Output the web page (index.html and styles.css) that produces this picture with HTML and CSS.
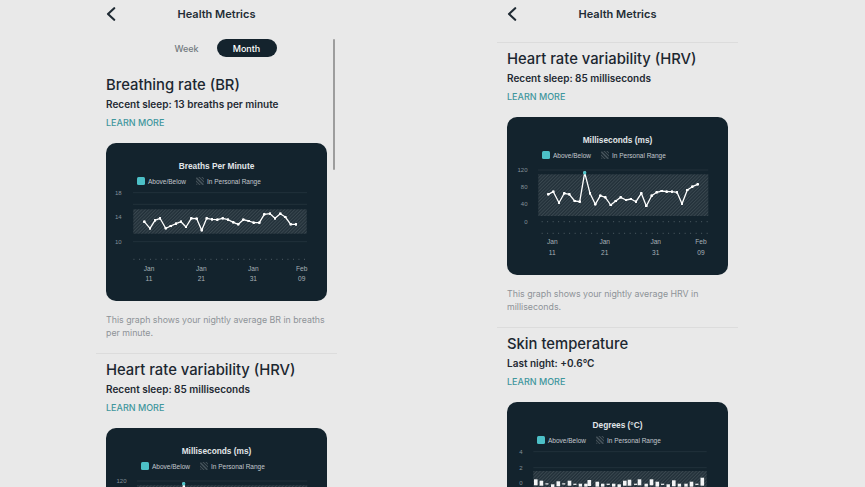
FILE: index.html
```html
<!DOCTYPE html>
<html lang="en">
<head>
<meta charset="utf-8">
<title>Health Metrics</title>
<link rel="stylesheet" href="styles.css">
</head>
<body>
<div class="stage">

  <section class="screen">
    <header class="topbar">
      <svg class="back" viewBox="0 0 10 14" width="10" height="14"><path d="M8.2 1.2 L2 7 L8.2 12.8"/></svg>
      <h1 class="title">Health Metrics</h1>
      <span></span>
    </header>
    <div class="segmented">
      <span class="seg">Week</span>
      <span class="seg seg-active">Month</span>
    </div>
    <div class="scrollbar"></div>

    <article class="metric metric-first">
      <h2 class="metric-name">Breathing rate (BR)</h2>
      <p class="reading">Recent sleep: 13 breaths per minute</p>
      <a class="learn">LEARN MORE</a>
      <div class="card">
        <div class="card-title">Breaths Per Minute</div>
        <div class="legend legend-br">
          <span class="sw sw-teal"></span><span class="lg-text">Above/Below</span>
          <span class="sw sw-hatch"></span><span class="lg-text">In Personal Range</span>
        </div>
        <svg class="plot" viewBox="0 43 221 115" width="221" height="115">
          <defs>
            <pattern id="hatchA" width="2.4" height="2.4" patternUnits="userSpaceOnUse" patternTransform="rotate(45)">
              <rect width="2.4" height="2.4" fill="#223039"/><rect width="1" height="2.4" fill="#3a4850"/>
            </pattern>
            <marker id="dotA" viewBox="0 0 4 4" refX="2" refY="2" markerWidth="2.8" markerHeight="2.8" markerUnits="userSpaceOnUse">
              <circle cx="2" cy="2" r="2" fill="#ffffff"/>
            </marker>
          </defs>
          <line class="grid" x1="27" y1="49.7" x2="201" y2="49.7"/>
          <line class="grid" x1="27" y1="61.3" x2="201" y2="61.3"/>
          <line class="grid" x1="27" y1="98.7" x2="201" y2="98.7"/>
          <rect x="27.3" y="66.3" width="173.4" height="24.4" fill="url(#hatchA)"/>
          <line class="ticks" x1="27.5" y1="116.3" x2="201" y2="116.3"/>
          <text class="ylab" x="15.7" y="51.8">18</text>
          <text class="ylab" x="15.7" y="76.3">14</text>
          <text class="ylab" x="15.7" y="100.8">10</text>
          <polyline class="series" marker-start="url(#dotA)" marker-mid="url(#dotA)" marker-end="url(#dotA)"
            points="38.3,78.7 44,85.3 49,77.3 54,75.3 59.7,85.3 64.7,83 70,80.7 75,78.7 80,84 85.3,75.3 90.7,75.7 95.7,87.3 100.7,75.3 106,76.3 111.3,76.7 116.7,75.3 122,76.7 127.3,79.3 132.3,81.3 137.3,76.7 142.7,78 147.7,79.7 153.3,79.7 158.3,71.3 164,70.7 169,75.3 174.3,70.7 179.3,74 184.7,81.3 190,81.3"/>
          <text class="xlab" x="43" y="127.8">Jan</text><text class="xlab" x="43" y="137.6">11</text>
          <text class="xlab" x="95.3" y="127.8">Jan</text><text class="xlab" x="95.3" y="137.6">21</text>
          <text class="xlab" x="147.3" y="127.8">Jan</text><text class="xlab" x="147.3" y="137.6">31</text>
          <text class="xlab" x="195.7" y="127.8">Feb</text><text class="xlab" x="195.7" y="137.6">09</text>
        </svg>
      </div>
      <p class="desc">This graph shows your nightly average BR in breaths per minute.</p>
    </article>

    <article class="metric">
      <h2 class="metric-name">Heart rate variability (HRV)</h2>
      <p class="reading">Recent sleep: 85 milliseconds</p>
      <a class="learn">LEARN MORE</a>
      <div class="card">
        <div class="card-title">Milliseconds (ms)</div>
        <div class="legend legend-hrv">
          <span class="sw sw-teal"></span><span class="lg-text">Above/Below</span>
          <span class="sw sw-hatch"></span><span class="lg-text">In Personal Range</span>
        </div>
        <svg class="plot" viewBox="0 43 221 115" width="221" height="115">
          <defs>
            <pattern id="hatchB" width="2.4" height="2.4" patternUnits="userSpaceOnUse" patternTransform="rotate(45)">
              <rect width="2.4" height="2.4" fill="#223039"/><rect width="1" height="2.4" fill="#3a4850"/>
            </pattern>
            <marker id="dotB" viewBox="0 0 4 4" refX="2" refY="2" markerWidth="2.8" markerHeight="2.8" markerUnits="userSpaceOnUse">
              <circle cx="2" cy="2" r="2" fill="#ffffff"/>
            </marker>
          </defs>
          <line class="grid" x1="31" y1="53" x2="201.3" y2="53"/>
          <rect x="31.3" y="57.3" width="170" height="41.7" fill="url(#hatchB)"/>
          <line class="ticks" x1="34.7" y1="104.7" x2="201.3" y2="104.7"/>
          <text class="ylab" x="20.5" y="55">120</text>
          <polyline class="series" marker-start="url(#dotB)" marker-mid="url(#dotB)" marker-end="url(#dotB)"
            points="41.3,77.3 46.3,74.7 52,85.7 57.3,76.3 62.3,77.3 67.7,84 72.7,84.7 77.7,55.7 83,76.3 88.3,87.3 93.3,78.7 98.3,80.3 103.7,88 108.7,84 113.7,80.3 119,83 124,82 129,84.7 134.3,76.3 139.3,89 144.7,78.7 149.7,75.3 154.7,74 159.7,74.7 165,74.7 170,75.3 175,86.7 180.3,73 185.3,69.7 190.7,67.3"/>
          <circle cx="77.7" cy="55.7" r="1.7" fill="#4cc3c9"/>
        </svg>
      </div>
    </article>
  </section>

  <section class="screen">
    <header class="topbar">
      <svg class="back" viewBox="0 0 10 14" width="10" height="14"><path d="M8.2 1.2 L2 7 L8.2 12.8"/></svg>
      <h1 class="title">Health Metrics</h1>
      <span></span>
    </header>

    <div class="scrolled">
      <article class="metric">
        <h2 class="metric-name">Heart rate variability (HRV)</h2>
        <p class="reading">Recent sleep: 85 milliseconds</p>
        <a class="learn">LEARN MORE</a>
        <div class="card">
          <div class="card-title">Milliseconds (ms)</div>
          <div class="legend legend-hrv">
            <span class="sw sw-teal"></span><span class="lg-text">Above/Below</span>
            <span class="sw sw-hatch"></span><span class="lg-text">In Personal Range</span>
          </div>
          <svg class="plot" viewBox="0 43 221 115" width="221" height="115">
            <defs>
              <pattern id="hatchC" width="2.4" height="2.4" patternUnits="userSpaceOnUse" patternTransform="rotate(45)">
                <rect width="2.4" height="2.4" fill="#223039"/><rect width="1" height="2.4" fill="#3a4850"/>
              </pattern>
              <marker id="dotC" viewBox="0 0 4 4" refX="2" refY="2" markerWidth="2.8" markerHeight="2.8" markerUnits="userSpaceOnUse">
                <circle cx="2" cy="2" r="2" fill="#ffffff"/>
              </marker>
            </defs>
            <line class="grid" x1="31" y1="53" x2="201.3" y2="53"/>
            <rect x="31.3" y="57.3" width="170" height="41.7" fill="url(#hatchC)"/>
            <line class="ticks" x1="34.7" y1="104.7" x2="201.3" y2="104.7"/>
            <line class="ticks" x1="34.7" y1="116.3" x2="201.3" y2="116.3"/>
            <text class="ylab" x="20.5" y="55">120</text>
            <text class="ylab" x="20.5" y="72.4">80</text>
            <text class="ylab" x="20.5" y="89.4">40</text>
            <text class="ylab" x="20.5" y="106.8">0</text>
            <polyline class="series" marker-start="url(#dotC)" marker-mid="url(#dotC)" marker-end="url(#dotC)"
              points="41.3,77.3 46.3,74.7 52,85.7 57.3,76.3 62.3,77.3 67.7,84 72.7,84.7 77.7,55.7 83,76.3 88.3,87.3 93.3,78.7 98.3,80.3 103.7,88 108.7,84 113.7,80.3 119,83 124,82 129,84.7 134.3,76.3 139.3,89 144.7,78.7 149.7,75.3 154.7,74 159.7,74.7 165,74.7 170,75.3 175,86.7 180.3,73 185.3,69.7 190.7,67.3"/>
            <circle cx="77.7" cy="55.7" r="1.7" fill="#4cc3c9"/>
            <text class="xlab" x="45.3" y="127.4">Jan</text><text class="xlab" x="45.3" y="137.6">11</text>
            <text class="xlab" x="97.7" y="127.4">Jan</text><text class="xlab" x="97.7" y="137.6">21</text>
            <text class="xlab" x="148.7" y="127.4">Jan</text><text class="xlab" x="148.7" y="137.6">31</text>
            <text class="xlab" x="194" y="127.4">Feb</text><text class="xlab" x="194" y="137.6">09</text>
          </svg>
        </div>
        <p class="desc">This graph shows your nightly average HRV in milliseconds.</p>
      </article>

      <article class="metric">
        <h2 class="metric-name">Skin temperature</h2>
        <p class="reading">Last night: +0.6°C</p>
        <a class="learn">LEARN MORE</a>
        <div class="card">
          <div class="card-title">Degrees (°C)</div>
          <div class="legend legend-skin">
            <span class="sw sw-teal"></span><span class="lg-text">Above/Below</span>
            <span class="sw sw-hatch"></span><span class="lg-text">In Personal Range</span>
          </div>
          <svg class="plot" viewBox="0 43 221 115" width="221" height="115">
            <defs>
              <pattern id="hatchD" width="2.4" height="2.4" patternUnits="userSpaceOnUse" patternTransform="rotate(45)">
                <rect width="2.4" height="2.4" fill="#223039"/><rect width="1" height="2.4" fill="#3a4850"/>
              </pattern>
            </defs>
            <line class="grid" x1="26.3" y1="49.7" x2="199.7" y2="49.7"/>
            <line class="grid" x1="26.3" y1="65.7" x2="199.7" y2="65.7"/>
            <rect x="26.3" y="69" width="173.4" height="30" fill="url(#hatchD)"/>
            <text class="ylab" x="15.7" y="51.8">4</text>
            <text class="ylab" x="15.7" y="67.8">2</text>
            <text class="ylab" x="15.7" y="83.4">0</text>
            <g class="bars">
              <rect x="27" y="77.3" width="3.6" height="6"/>
              <rect x="32.6" y="78.7" width="3.6" height="5"/>
              <rect x="38.4" y="81.3" width="3" height="1.2"/>
              <rect x="44" y="82.3" width="3.4" height="3"/>
              <rect x="49.5" y="79.3" width="3.6" height="5"/>
              <rect x="55.2" y="81.3" width="3" height="1.2"/>
              <rect x="60.7" y="78.7" width="3.6" height="5"/>
              <rect x="66.3" y="81.7" width="3.2" height="1.2"/>
              <rect x="71.7" y="81.7" width="3.4" height="3"/>
              <rect x="77.2" y="81.7" width="3.4" height="3"/>
              <rect x="80.5" y="78" width="3.6" height="6"/>
              <rect x="88.5" y="79.7" width="3.6" height="5"/>
              <rect x="94" y="81.7" width="3.4" height="3"/>
              <rect x="99.6" y="81.7" width="3.2" height="1.2"/>
              <rect x="105" y="81.7" width="3.4" height="3"/>
              <rect x="110.5" y="82.3" width="3.4" height="3"/>
              <rect x="116" y="78.7" width="3.6" height="5"/>
              <rect x="120.7" y="77.7" width="3.6" height="6"/>
              <rect x="127" y="81.7" width="3.2" height="1.2"/>
              <rect x="130.7" y="77.3" width="3.6" height="6"/>
              <rect x="137.5" y="81.7" width="3.4" height="3"/>
              <rect x="142.7" y="77.3" width="3.6" height="6"/>
              <rect x="148.5" y="79.7" width="3.6" height="5"/>
              <rect x="154" y="81.7" width="3.2" height="1.2"/>
              <rect x="159.5" y="82.3" width="3.4" height="3"/>
              <rect x="165" y="78.3" width="3.6" height="6"/>
              <rect x="170.7" y="81.7" width="3.4" height="3"/>
              <rect x="177.3" y="81.7" width="3.4" height="3"/>
              <rect x="182.7" y="79.7" width="3.6" height="5"/>
              <rect x="188.3" y="81.7" width="3.2" height="1.2"/>
              <rect x="193.5" y="75.7" width="3.6" height="8"/>
            </g>
          </svg>
        </div>
      </article>
    </div>
  </section>

</div>
</body>
</html>
```

FILE: styles.css
```css
* { box-sizing: border-box; }

html, body {
  margin: 0;
  padding: 0;
  background: #e9e9e9;
}

body {
  font-family: Inter, "Noto Sans", "Liberation Sans", sans-serif;
  color: #1d2831;
  width: 865px;
  height: 487px;
  overflow: hidden;
}

.stage {
  display: flex;
  gap: 160px;
  padding-left: 96px;
  height: 487px;
}

.screen {
  position: relative;
  width: 241px;
  height: 487px;
  overflow: hidden;
}

.topbar {
  display: grid;
  grid-template-columns: 1fr auto 1fr;
  align-items: center;
  height: 27px;
  padding: 0 10px;
}

.back {
  display: block;
  fill: none;
  stroke: #1f2a33;
  stroke-width: 2.1;
  stroke-linecap: round;
  stroke-linejoin: round;
}

.title {
  margin: 0;
  font-size: 11px;
  font-weight: 600;
  color: #222c35;
}

.segmented {
  display: flex;
  justify-content: center;
  margin-top: 12px;
}

.seg {
  width: 60px;
  height: 18px;
  border-radius: 9px;
  display: flex;
  align-items: center;
  justify-content: center;
  font-size: 9px;
  font-weight: 500;
  color: #737a80;
}

.seg-active {
  background: #14232d;
  color: #ffffff;
}

.scrollbar {
  position: absolute;
  left: 237px;
  top: 39px;
  width: 2.4px;
  height: 131px;
  border-radius: 2px;
  background: #9d9d9d;
}

.scrolled {
  margin-top: 15px;
}

.metric {
  border-top: 1px solid #dcdcdc;
  padding: 6px 10px 14px 10px;
}

.metric-first {
  border-top: 0;
  margin-top: 11px;
  padding-top: 7px;
}

.metric-name {
  margin: 0;
  font-size: 14.8px;
  line-height: 20px;
  font-weight: 500;
  color: #1c2730;
}

.reading {
  margin: 2px 0 0 0;
  font-size: 10px;
  line-height: 14px;
  font-weight: 600;
  color: #1f2a33;
}

.learn {
  display: block;
  margin-top: 5px;
  font-size: 9px;
  line-height: 14px;
  font-weight: 500;
  color: #3f979d;
}

.card {
  margin-top: 13px;
  width: 221px;
  height: 158px;
  border-radius: 10px;
  background: #13232d;
  padding-top: 17px;
  font-family: "Liberation Sans", Arial, sans-serif;
}

.card-title {
  text-align: center;
  font-size: 8.3px;
  line-height: 12px;
  font-weight: 700;
  color: #e2e6e9;
}

.legend {
  display: flex;
  align-items: center;
  height: 10px;
  margin-top: 4px;
  font-size: 6.5px;
  color: #c3c9cd;
}

.legend-br { padding-left: 31px; }
.legend-hrv { padding-left: 35px; }
.legend-skin { padding-left: 30px; }

.sw {
  width: 8px;
  height: 8px;
  border-radius: 1.5px;
  margin-right: 3px;
}

.sw-teal { background: #4cc0c7; }

.sw-hatch {
  margin-left: 10px;
  background: repeating-linear-gradient(45deg, #414f57 0 1px, #1f2d36 1px 2.4px);
}

.plot {
  display: block;
}

.plot .grid {
  stroke: #2b3a44;
  stroke-width: 0.6;
}

.plot .ticks {
  stroke: #56636b;
  stroke-width: 1;
  stroke-dasharray: 0.9 4.6;
}

.plot .ylab {
  font-family: "Liberation Sans", Arial, sans-serif;
  font-size: 6px;
  fill: #85919a;
  text-anchor: end;
}

.plot .xlab {
  font-family: "Liberation Sans", Arial, sans-serif;
  font-size: 6.6px;
  fill: #a7b0b6;
  text-anchor: middle;
}

.plot .series {
  fill: none;
  stroke: #ffffff;
  stroke-width: 1.3;
  stroke-linejoin: round;
}

.plot .bars rect {
  fill: #f2f4f5;
}

.desc {
  margin: 12px 0 0 0;
  font-size: 8.8px;
  line-height: 13px;
  color: #8e9398;
}
```
